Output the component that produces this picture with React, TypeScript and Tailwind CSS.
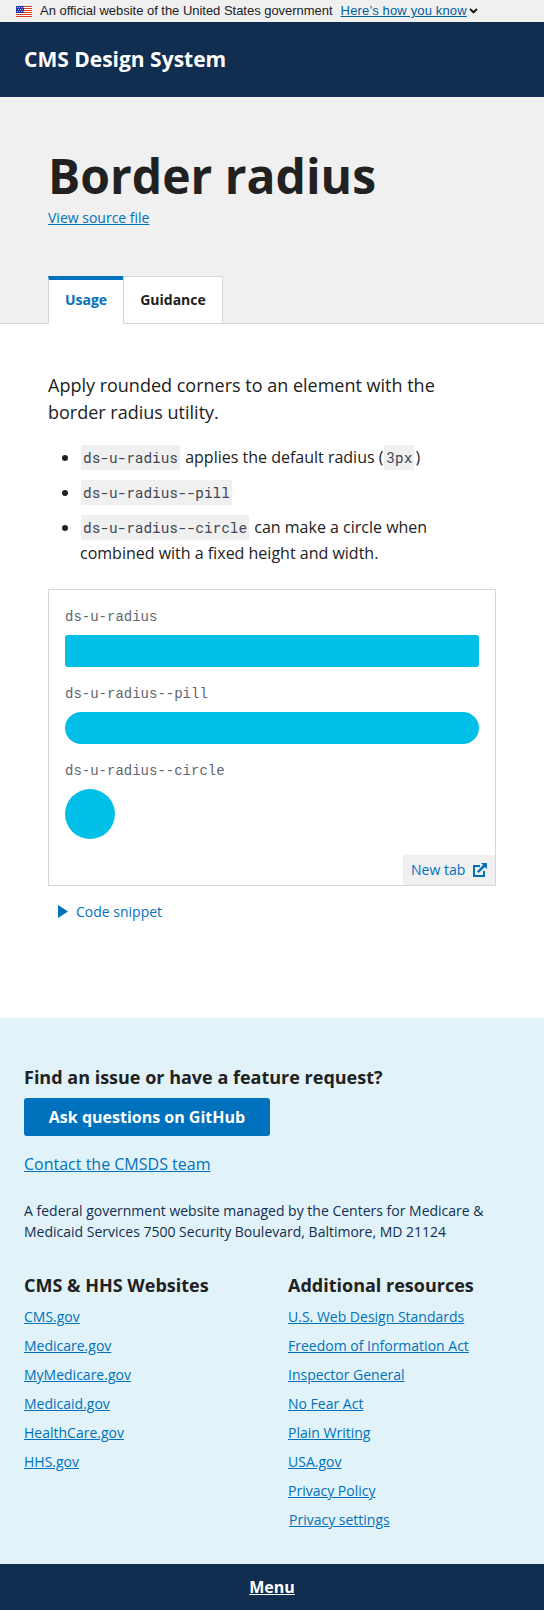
import React from "react";

const siteLinks = ["CMS.gov", "Medicare.gov", "MyMedicare.gov", "Medicaid.gov", "HealthCare.gov", "HHS.gov"];
const resourceLinks = [
  "U.S. Web Design Standards",
  "Freedom of Information Act",
  "Inspector General",
  "No Fear Act",
  "Plain Writing",
  "USA.gov",
  "Privacy Policy",
];

function Flag() {
  return (
    <svg width="16" height="11" viewBox="0 0 16 11" shapeRendering="crispEdges" aria-hidden="true">
      <rect width="16" height="11" fill="#fff" />
      {[0, 2, 4, 6, 8, 10].map((y) => (
        <rect key={y} y={y} width="16" height="1" fill="#db3e1f" />
      ))}
      <rect width="8" height="7" fill="#1e33b1" />
      {[1, 3, 5].map((y) =>
        (y === 3 ? [2, 4, 6] : [1, 3, 5, 7]).map((x) => (
          <rect key={`${x}-${y}`} x={x} y={y} width="1" height="1" fill="#b9c0e6" />
        )),
      )}
    </svg>
  );
}

function Code({ children }: { children: React.ReactNode }) {
  return (
    <code className="mx-px bg-[#f0f0f0] px-[2px] py-[3px] font-['Roboto_Mono','Liberation_Mono',monospace] text-[14.4px] leading-none text-[#404655]">
      {children}
    </code>
  );
}

function Bullet({ children }: { children: React.ReactNode }) {
  return (
    <li className="flex leading-[26px]">
      <span className="mt-[11px] ml-[14px] mr-[12px] size-[6px] shrink-0 rounded-full bg-[#212121]" />
      <span>{children}</span>
    </li>
  );
}

function Sample({ label, shape }: { label: string; shape: string }) {
  return (
    <div className="mb-4">
      <div className="mb-[7px] h-[22px] pt-px font-['Liberation_Mono',monospace] text-[14px] leading-[21px] text-[#62656f]">
        {label}
      </div>
      <div className={shape} />
    </div>
  );
}

function LinkList({ title, links, children }: { title: string; links: string[]; children?: React.ReactNode }) {
  return (
    <div className="w-[264px] shrink-0">
      <h2 className="text-[18px] leading-[27px] font-bold">{title}</h2>
      <ul className="mt-[7px]">
        {links.map((link) => (
          <li key={link} className="mb-2 text-[14px] leading-[21px]">
            <a className="text-[#0071bc] underline">{link}</a>
          </li>
        ))}
        {children}
      </ul>
    </div>
  );
}

export default function App() {
  return (
    <div className="min-h-[1610px] w-full overflow-x-hidden bg-white font-['Open_Sans',sans-serif] text-[16px] text-[#212121]">
      <div className="flex h-[22px] items-center bg-[#f0f0f0] pl-4 font-['Liberation_Sans',sans-serif] text-[13px] leading-[20px]">
        <Flag />
        <span className="ml-2 tracking-[-0.025px] whitespace-nowrap">An official website of the United States government</span>
        <a className="ml-2 tracking-[0.15px] whitespace-nowrap text-[#005ea2] underline">Here’s how you know</a>
        <svg className="ml-[2px]" width="9" height="6" viewBox="0 0 9 6" fill="none" stroke="#1b1b1b" strokeWidth="2">
          <path d="M1 1l3.5 3.3L8 1" />
        </svg>
      </div>

      <header className="flex h-[75px] items-center bg-[#112e51] pb-[2px] pl-6">
        <span className="text-[21px] leading-[30px] font-bold text-white">CMS Design System</span>
      </header>

      <div className="flex h-[227px] flex-col border-b border-[#d6d7d9] bg-[#f0f0f0] px-12 pt-12">
        <h1 className="text-[48px] leading-[62px] font-bold">Border radius</h1>
        <a className="h-[21px] self-start text-[14px] leading-[21px] text-[#0071bc] underline">View source file</a>
        <div className="mt-12 -mb-px flex h-[48px] text-[14px] font-bold">
          <div className="flex w-[75px] justify-center border-t-4 border-l border-t-[#0071bc] border-l-[#d6d7d9] bg-white pt-[9px] leading-[21px] text-[#0071bc]">
            Usage
          </div>
          <div className="flex w-[100px] justify-center border border-[#d6d7d9] bg-white pt-[12px] leading-[21px]">
            Guidance
          </div>
        </div>
      </div>

      <main className="h-[694px] px-12 pt-12">
        <p className="text-[18px] leading-[27px]">
          Apply rounded corners to an element with the
          <br />
          border radius utility.
        </p>
        <ul className="mt-[18px] flex flex-col gap-[9px]">
          <Bullet>
            <Code>ds-u-radius</Code> applies the default radius (<Code>3px</Code>)
          </Bullet>
          <Bullet>
            <Code>ds-u-radius--pill</Code>
          </Bullet>
          <Bullet>
            <Code>ds-u-radius--circle</Code> can make a circle when
            <br />
            combined with a fixed height and width.
          </Bullet>
        </ul>

        <section className="mt-[23px] flex h-[297px] flex-col border border-[#d6d7d9] pt-4 pl-4">
          <div className="h-[249px] pr-4">
            <Sample label="ds-u-radius" shape="h-8 rounded-[3px] bg-[#02bfe7]" />
            <Sample label="ds-u-radius--pill" shape="h-8 rounded-full bg-[#02bfe7]" />
            <Sample label="ds-u-radius--circle" shape="size-[50px] rounded-full bg-[#02bfe7]" />
          </div>
          <a className="mt-auto flex h-[30px] w-[92px] shrink-0 items-center self-end bg-[#f0f0f0] pb-px pl-2 text-[14px] leading-[21px] text-[#0071bc]">
            New tab
            <svg className="ml-2" width="14" height="14" viewBox="0 0 14 14" fill="#0071bc" aria-hidden="true">
              <path d="M0 2h7v2H2v8h8V8h2v6H0z" />
              <path d="M8 0h6v6l-2-2-6.5 6L4 8.5 10 2z" />
            </svg>
          </a>
        </section>

        <div className="mt-[15px] ml-[10px] flex h-[21px] items-center text-[14px] leading-[21px] text-[#0071bc]">
          <svg className="mb-px" width="10" height="13" viewBox="0 0 10 13" fill="#0071bc" aria-hidden="true">
            <path d="M0 0l10 6.5L0 13z" />
          </svg>
          <span className="ml-2">Code snippet</span>
        </div>
      </main>

      <footer className="h-[546px] bg-[#e1f3f8] px-6 pt-[46px]">
        <h2 className="text-[18px] leading-[27px] font-bold">Find an issue or have a feature request?</h2>
        <a className="mt-[7px] flex h-[38px] w-[246px] items-center justify-center rounded-[3px] bg-[#0071bc] font-bold text-white">
          Ask questions on GitHub
        </a>
        <div className="mt-4 leading-6">
          <a className="text-[#0071bc] underline">Contact the CMSDS team</a>
        </div>
        <p className="mt-6 text-[14px] leading-[21px] text-[#112e51]">
          A federal government website managed by the Centers for Medicare &amp;
          <br />
          Medicaid Services 7500 Security Boulevard, Baltimore, MD 21124
        </p>
        <div className="mt-[30px] flex">
          <LinkList title="CMS & HHS Websites" links={siteLinks} />
          <LinkList title="Additional resources" links={resourceLinks}>
            <li className="pl-px text-[14px] leading-[21px]">
              <button className="text-[#0071bc] underline">Privacy settings</button>
            </li>
          </LinkList>
        </div>
      </footer>

      <nav className="flex h-[46px] items-center justify-center bg-[#112e51] leading-6 font-bold text-white underline">
        Menu
      </nav>
    </div>
  );
}
